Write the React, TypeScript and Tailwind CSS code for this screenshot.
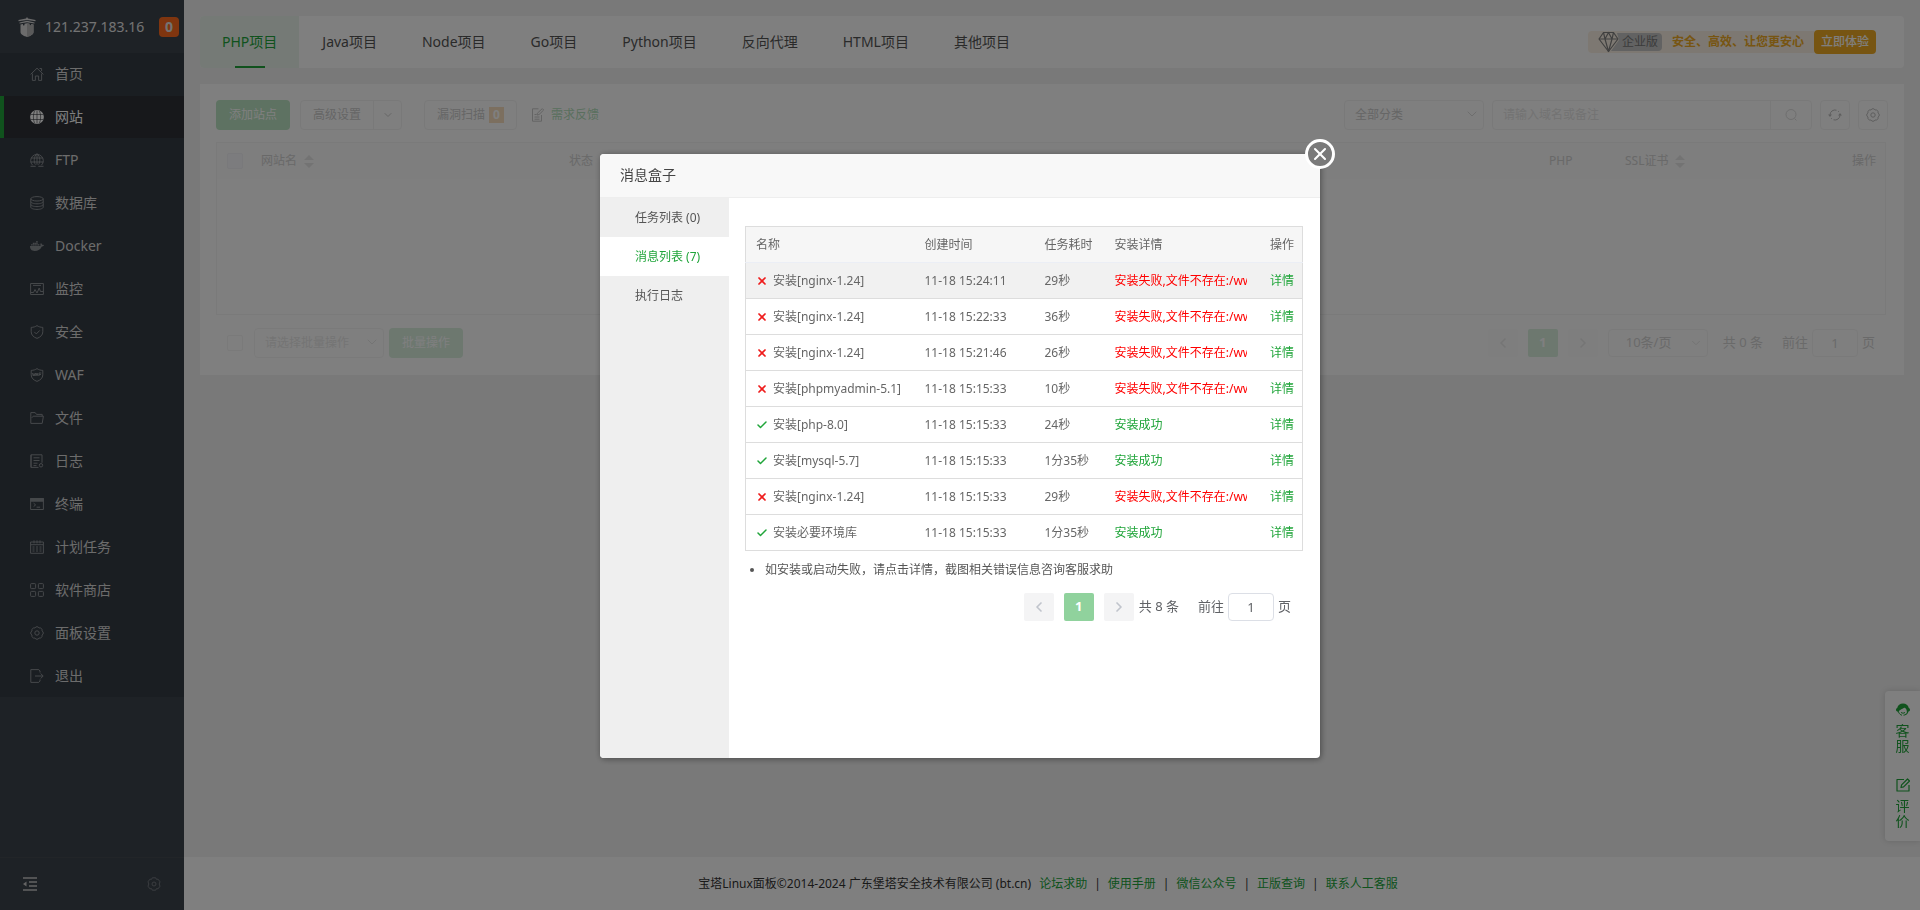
import type { ReactNode } from 'react'
import { Check, ChevronDown, ChevronLeft, ChevronRight, X } from 'lucide-react'
import { FaDocker } from 'react-icons/fa6'

function Icon({ children, size = 14, className = '' }: { children: ReactNode; size?: number; className?: string }) {
  return (
    <svg
      width={size}
      height={size}
      viewBox="0 0 14 14"
      fill="none"
      stroke="currentColor"
      strokeWidth="1"
      strokeLinejoin="round"
      className={`shrink-0 ${className}`}
      aria-hidden="true"
    >
      {children}
    </svg>
  )
}

function GearIcon() {
  return (
    <Icon>
      <path d="M11.990 9.070A2.300 2.300 0 0 1 9.070 11.990A2.300 2.300 0 0 1 4.930 11.990A2.300 2.300 0 0 1 2.010 9.070A2.300 2.300 0 0 1 2.010 4.930A2.300 2.300 0 0 1 4.930 2.010A2.300 2.300 0 0 1 9.070 2.010A2.300 2.300 0 0 1 11.990 4.930A2.300 2.300 0 0 1 11.990 9.070z" />
      <circle cx="7" cy="7" r="2.200" />
    </Icon>
  )
}

function HexGearIcon() {
  return (
    <Icon>
      <path d="M5.300.8h3.400l.7 1.500 1.700-.1 1.900 2.600L12.200 7l.8 2.200-1.900 2.600-1.700-.1-.7 1.500H5.300l-.7-1.500-1.700.1L1 9.200 1.800 7 1 4.800l1.900-2.600 1.700.1z" />
      <circle cx="7" cy="7" r="2" />
    </Icon>
  )
}

const menu: { label: string; icon: ReactNode; active?: boolean }[] = [
  {
    label: '首页',
    icon: (
      <Icon>
        <path d="M.6 7.400 7 1.200l6.400 6.200M2.400 6.600v6.800h3V9h3.200v4.400h3V6.600M9.600 1.500h2v2.600" />
      </Icon>
    ),
  },
  {
    label: '网站',
    active: true,
    icon: (
      <Icon>
        <circle cx="7" cy="7" r="6.900" fill="currentColor" stroke="none" />
        <path d="M.5 4.500h13M.5 9.500h13M7 .5v13M4.500 1C3 4.500 3 9.500 4.500 13M9.500 1C11 4.500 11 9.500 9.500 13" stroke="#2e3137" strokeWidth=".6" />
      </Icon>
    ),
  },
  {
    label: 'FTP',
    icon: (
      <Icon>
        <path d="M2.600 12.200a6.300 6.300 0 1 1 8.800 0M1 5h12M.7 9h12.600M7 .7v11M7 .7C3.600 3.400 3.600 9 5.400 11.600M7 .7C10.400 3.400 10.400 9 8.600 11.600M.5 13.300h5.200M8.300 13.300h5.200" />
      </Icon>
    ),
  },
  {
    label: '数据库',
    icon: (
      <Icon>
        <ellipse cx="7" cy="2.800" rx="6.200" ry="2.200" />
        <path d="M.8 2.800v8.400c0 1.200 2.800 2.200 6.200 2.200s6.200-1 6.200-2.200V2.800M.8 5.600c0 1.200 2.800 2.200 6.200 2.200s6.200-1 6.200-2.200M.8 8.400c0 1.200 2.800 2.200 6.200 2.200s6.200-1 6.200-2.200" />
      </Icon>
    ),
  },
  { label: 'Docker', icon: <FaDocker size={14} className="shrink-0" aria-hidden="true" /> },
  {
    label: '监控',
    icon: (
      <Icon>
        <path d="M.6 1.500h12.800v11H.6zM3 3.400h8M1 10.500h2.500l1.500-3 2 3.500 2.200-5 1.300 3.500H13" />
      </Icon>
    ),
  },
  {
    label: '安全',
    icon: (
      <Icon>
        <path d="M7 .6C5.400 1.800 3.400 2.300 1.200 2.400v4.400c0 3.200 2.300 5.300 5.800 6.600 3.500-1.300 5.800-3.400 5.800-6.600V2.400C10.600 2.300 8.600 1.800 7 .6zM4.300 6.900l2 2 3.500-3.500" />
      </Icon>
    ),
  },
  {
    label: 'WAF',
    icon: (
      <Icon>
        <path d="M7 .6C5.400 1.800 3.400 2.300 1.200 2.400v4.400c0 3.200 2.300 5.300 5.800 6.600 3.500-1.300 5.800-3.400 5.800-6.600V2.400C10.600 2.300 8.600 1.800 7 .6z" />
        <path d="M2.500 5l.8 3 .8-2.500.8 2.500.8-3M6 8l1-3 1 3M9 8V5h2.300M9 6.500h2" />
      </Icon>
    ),
  },
  {
    label: '文件',
    icon: (
      <Icon>
        <path d="M.8 12.400V1.600h4.400l1.300 1.800h5.700v1.800M.8 12.400h11.400l1.200-7.200H3.200l-1.400 1.600" />
      </Icon>
    ),
  },
  {
    label: '日志',
    icon: (
      <Icon>
        <path d="M8.500 13.400H1V.8h11v8M1 .8v12.600M3.500 3.800h6M3.500 6.500h6M3.500 9.200h4M3.500 11.600h3" />
        <circle cx="11" cy="11.300" r="1.700" />
      </Icon>
    ),
  },
  {
    label: '终端',
    icon: (
      <Icon>
        <path d="M.6 1.500h12.800v11H.6z" />
        <path d="M.6 1.500h12.800v2.700H.6z" fill="currentColor" />
        <path d="M3.600 6.200l2 1.700-2 1.700M6.600 10.200h3.500" />
      </Icon>
    ),
  },
  {
    label: '计划任务',
    icon: (
      <Icon>
        <path d="M.6 2h12.800v11.300H.6zM.6 4.700h12.800M4 .4v3M10 .4v3M7 .4v3M2.500 7h2M6 7h2M9.500 7h2M2.500 9h2M6 9h2M9.500 9h2M2.500 11h2M6 11h2M9.500 11h2" />
      </Icon>
    ),
  },
  {
    label: '软件商店',
    icon: (
      <Icon>
        <rect x=".6" y=".6" width="5" height="5" rx=".8" />
        <rect x="8.400" y=".6" width="5" height="5" rx=".8" />
        <rect x=".6" y="8.400" width="5" height="5" rx=".8" />
        <rect x="8.400" y="8.400" width="5" height="5" rx=".8" />
      </Icon>
    ),
  },
  { label: '面板设置', icon: <GearIcon /> },
  {
    label: '退出',
    icon: (
      <Icon>
        <path d="M10 3.500V2L8.800.6H.8v12.800h8L10 12v-1.500M5 7h8M10.600 4.500 13.200 7l-2.600 2.500" />
      </Icon>
    ),
  },
]

const tabs = ['PHP项目', 'Java项目', 'Node项目', 'Go项目', 'Python项目', '反向代理', 'HTML项目', '其他项目']

const messages = [
  { name: '安装[nginx-1.24]', time: '11-18 15:24:11', cost: '29秒', ok: false },
  { name: '安装[nginx-1.24]', time: '11-18 15:22:33', cost: '36秒', ok: false },
  { name: '安装[nginx-1.24]', time: '11-18 15:21:46', cost: '26秒', ok: false },
  { name: '安装[phpmyadmin-5.1]', time: '11-18 15:15:33', cost: '10秒', ok: false },
  { name: '安装[php-8.0]', time: '11-18 15:15:33', cost: '24秒', ok: true },
  { name: '安装[mysql-5.7]', time: '11-18 15:15:33', cost: '1分35秒', ok: true },
  { name: '安装[nginx-1.24]', time: '11-18 15:15:33', cost: '29秒', ok: false },
  { name: '安装必要环境库', time: '11-18 15:15:33', cost: '1分35秒', ok: true },
]

const footerLinks = ['论坛求助', '使用手册', '微信公众号', '正版查询', '联系人工客服']

function Sidebar() {
  return (
    <aside className="flex w-[184px] shrink-0 flex-col bg-[#3c444d] text-sm text-[#e6e6e6]">
      <div className="flex h-[53px] items-center pr-[5px] pl-[18px]">
        <svg width="18" height="20" viewBox="0 0 18 20" fill="#d8d8d8" className="shrink-0" aria-hidden="true">
          <path d="M9 0l1 1.600 7.500 1.500v1.200L9 3 .5 4.300V3.100L8 1.600zM9 3.800l7.500 1.700v1L9 5.200 1.500 6.500v-1zM2.500 7.500 5 7v1.500l1.500-.3V6.700L9 6.300l2.500.4v1.500l1.500.3V7l2.500.5V15c0 2.500-3.500 4-6.500 5-3-1-6.500-2.500-6.500-5z" />
          <path d="M9 6.300V20c3-1 6.500-2.500 6.500-5V7.500L13 7v1.500l-1.500-.3V6.700z" fill="#b4b4b4" />
        </svg>
        <span className="ml-[9px]">121.237.183.16</span>
        <span className="ml-auto flex size-5 items-center justify-center rounded bg-[#ff6b1f] font-bold">0</span>
      </div>
      <nav className="flex flex-col gap-px bg-[#353c44]">
        {menu.map((item) => (
          <a
            key={item.label}
            href="#"
            className={
              item.active
                ? 'flex h-[42px] items-center gap-[11px] border-l-4 border-[#20a53a] bg-[#2e3137] pl-[26px] text-white'
                : 'flex h-[42px] items-center gap-[11px] pl-[30px] text-[#d9d9d9]'
            }
          >
            <span className={item.active ? 'text-white' : 'text-[#8b9095]'}>{item.icon}</span>
            {item.label}
          </a>
        ))}
      </nav>
      <div className="mt-auto flex h-[53px] items-center justify-between border-t border-[#444a51] px-[23px]">
        <button type="button" title="收起菜单" className="text-[#c8c8c8]">
          <Icon>
            <path d="M0 1h14M6 5h8M6 9h8M0 13h14" strokeWidth="1.500" />
            <path d="M3.500 4.500v5L0 7z" fill="currentColor" stroke="none" />
          </Icon>
        </button>
        <button type="button" title="设置" className="text-[#757a80]">
          <HexGearIcon />
        </button>
      </div>
    </aside>
  )
}

function TopTabs() {
  return (
    <header className="flex h-[52px] items-center rounded bg-white text-sm text-[#555]">
      <nav className="flex h-full gap-px">
        {tabs.map((tab, i) => (
          <a
            key={tab}
            href="#"
            className={
              i === 0
                ? 'relative flex items-center rounded-l bg-[#ebf5ed] px-[22px] text-[#20a53a]'
                : 'flex items-center px-[22px]'
            }
          >
            {tab}
            {i === 0 && <span className="absolute bottom-0 left-1/2 h-0.5 w-[30px] -translate-x-1/2 bg-[#20a53a]" />}
          </a>
        ))}
      </nav>
      <div className="mr-7 ml-auto flex items-center text-xs">
        <div className="flex h-[22px] items-center rounded-l bg-[#fbf1e4] pl-2.5">
          <svg width="22" height="22" viewBox="0 0 22 22" fill="none" stroke="#808080" strokeWidth="1.200" strokeLinejoin="round" className="shrink-0" aria-hidden="true">
            <path d="M19 2h3v18h-9l8-11z" fill="#c4c4c4" stroke="none" />
            <path d="M5.500 1.500h10L20 8 10.500 20.500 1 8z" fill="#fbf1e4" />
            <path d="M1 8h19M5.500 1.500 7 8l3.500 12.500L14 8l1.500-6.500M7 8l3.500-6.500L14 8" />
          </svg>
          <span className="flex h-[18px] items-center rounded-r-sm bg-[#c4c4c4] pr-1 pl-0.5 text-[#777]">企业版</span>
          <span className="mr-2.5 ml-2.5 font-bold text-[#efab25]">安全、高效、让您更安心</span>
        </div>
        <button type="button" className="h-6 rounded-sm bg-[#efab25] px-[7px] font-medium text-white">立即体验</button>
      </div>
    </header>
  )
}

function SortIcon() {
  return (
    <svg width="10" height="13" viewBox="0 0 10 13" fill="#e6e6e6" aria-hidden="true">
      <path d="M5 0l5 5H0zM5 13l5-5H0z" />
    </svg>
  )
}

function Pager({ total, muted = false, children }: { total: number; muted?: boolean; children?: ReactNode }) {
  const input = muted
    ? 'mx-1 h-7 w-[46px] rounded border border-[#f5f5f5] bg-white text-center'
    : 'mx-1 h-7 w-[46px] rounded border border-[#dcdfe6] bg-white text-center'
  const arrow = muted
    ? 'flex h-7 w-[30px] items-center justify-center rounded-xs bg-[#fcfcfc] text-[#ebebeb]'
    : 'flex h-7 w-[30px] items-center justify-center rounded-xs bg-[#f4f4f5] text-[#c0c4cc]'
  return (
    <div className={muted ? 'flex items-center text-[13px] text-[#d4d4d4]' : 'flex items-center text-[13px] text-[#606266]'}>
      <div className="flex gap-2.5">
        <button type="button" title="上一页" className={arrow}>
          <ChevronLeft size={16} strokeWidth={2.500} />
        </button>
        <button
          type="button"
          className={
            muted
              ? 'h-7 w-[30px] rounded-xs bg-[#daf0df] font-bold text-white'
              : 'h-7 w-[30px] rounded-xs bg-[#90d29d] font-bold text-white'
          }
        >
          1
        </button>
        <button type="button" title="下一页" className={arrow}>
          <ChevronRight size={16} strokeWidth={2.500} />
        </button>
      </div>
      {children}
      <span className={muted ? 'ml-[15px]' : 'ml-[5px]'}>共 {total} 条</span>
      <label className="ml-[19px] flex items-center">
        前往
        <input type="text" defaultValue="1" className={input} />
        页
      </label>
    </div>
  )
}

function SitePanel() {
  return (
    <section className="mt-4 bg-white px-4 pt-4 pb-[17px] text-xs text-[#ccc]">
      <div className="flex h-[30px] items-center">
        <button type="button" className="h-full w-[74px] rounded bg-[#bce4c4] text-white">添加站点</button>
        <div className="ml-2.5 flex h-full rounded border border-[#f3f3f3]">
          <button type="button" className="px-3">高级设置</button>
          <button type="button" title="更多" className="flex w-7 items-center justify-center border-l border-[#f3f3f3]">
            <ChevronDown size={12} />
          </button>
        </div>
        <button type="button" className="ml-[22px] flex h-full items-center gap-1 rounded border border-[#f3f3f3] px-3">
          漏洞扫描
          <span className="flex h-4 w-[15px] items-center justify-center bg-[#f8dfbf] font-bold text-white">0</span>
        </button>
        <a href="#" className="ml-3.5 flex items-center gap-1.5 text-[#b4dfbd]">
          <Icon className="text-[#c8c8c8]">
            <path d="M7.500.8H1.500v12.400h9V7M3.500 9h5M3.500 11.200h5M3.500 6.500h2M6 7l.4-1.800L11.300.6l1.400 1.400L8 6.600z" />
          </Icon>
          需求反馈
        </a>
        <div className="ml-auto flex h-full items-center gap-2">
          <div className="relative h-full w-[140px]">
            <select aria-label="分类" className="h-full w-full appearance-none rounded border border-[#f3f3f3] bg-white pl-2.5">
              <option>全部分类</option>
            </select>
            <ChevronDown size={16} className="pointer-events-none absolute top-1.5 right-1 text-[#ddd]" strokeWidth={1.500} />
          </div>
          <div className="flex h-full w-[320px] rounded border border-[#f3f3f3]">
            <input type="text" aria-label="搜索" placeholder="请输入域名或备注" className="min-w-0 flex-1 px-2.5 placeholder:text-[#e6e6e6]" />
            <button type="button" title="搜索" className="flex w-[41px] items-center justify-center border-l border-[#f3f3f3] text-[#ddd]">
              <Icon>
                <circle cx="7" cy="6.500" r="5" />
                <path d="M10.500 10.500l2 2" />
              </Icon>
            </button>
          </div>
          <button type="button" title="刷新" className="flex size-[30px] items-center justify-center rounded border border-[#f3f3f3] text-[#bbb]">
            <Icon>
              <path d="M2 7A5 5 0 0 1 8.500 2.200M5.500 11.800A5 5 0 0 0 12 7M4 11a5 5 0 0 1-1-1M10 3a5 5 0 0 1 1 1" />
              <path d="M0 6.500h4L2 9zM10 7.500h4L12 5z" fill="currentColor" stroke="none" />
            </Icon>
          </button>
          <button type="button" title="设置" className="flex size-[30px] items-center justify-center rounded border border-[#f3f3f3] text-[#bbb]">
            <GearIcon />
          </button>
        </div>
      </div>

      <div className="mt-3 mr-0.5 h-[173px] border border-[#f4f4f4]">
        <table className="w-full table-fixed text-left text-[#d2d2d2]">
          <thead>
            <tr className="h-9 bg-[#fcfcfc]">
              <th className="w-[34px] pl-2.5">
                <input type="checkbox" aria-label="全选" className="block size-4 appearance-none rounded-xs border border-[#f2f2f6] bg-[#f9f9fc]" />
              </th>
              <th className="w-[308px] pl-2.5 font-normal">
                <span className="flex items-center gap-[7px]">网站名 <SortIcon /></span>
              </th>
              <th className="w-[980px] pl-2.5 font-normal">状态</th>
              <th className="w-[76px] pl-2.5 font-normal">PHP</th>
              <th className="pl-2.5 font-normal">
                <span className="flex items-center gap-[7px]">SSL证书 <SortIcon /></span>
              </th>
              <th className="w-16 pr-[9px] text-right font-normal">操作</th>
            </tr>
          </thead>
        </table>
      </div>

      <div className="mt-[13px] flex h-[30px] items-center">
        <input type="checkbox" aria-label="选择全部" className="ml-[11px] size-4 appearance-none rounded-xs border border-[#f5f5f5]" />
        <div className="relative ml-[11px] h-full w-[130px] text-[#e9e9e9]">
          <select aria-label="批量操作" className="h-full w-full appearance-none rounded border border-[#f5f5f5] bg-white pl-2.5">
            <option>请选择批量操作</option>
          </select>
          <ChevronDown size={16} className="pointer-events-none absolute top-1.5 right-1" strokeWidth={1.500} />
        </div>
        <button type="button" className="ml-[5px] h-full w-[74px] rounded bg-[#daf0df] text-white">批量操作</button>
        <div className="mr-[13px] ml-auto">
          <Pager total={0} muted>
            <div className="relative ml-2.5 h-7 w-[100px]">
              <select aria-label="每页条数" className="h-full w-full appearance-none rounded border border-[#f5f5f5] bg-white pl-[17px]">
                <option>10条/页</option>
              </select>
              <ChevronDown size={14} className="pointer-events-none absolute top-[7px] right-[5px] text-[#e4e4e4]" strokeWidth={1.500} />
            </div>
          </Pager>
        </div>
      </div>
    </section>
  )
}

function FloatingHelp() {
  return (
    <div className="fixed right-0 bottom-[69px] flex w-[35px] flex-col items-center gap-[25px] rounded-l bg-white pt-3 pb-[13px] text-sm leading-[15px] text-[#20a53a] shadow-[0_0_6px_rgba(0,0,0,0.15)]">
      <a href="#" className="flex w-3.5 flex-col items-center gap-1.5">
        <Icon>
          <path d="M7 .5a6 6 0 0 0-5.800 4.600C.4 5.300 0 6 0 6.800c0 1 .6 1.700 1.500 1.700.6 1 .8 1.300 1.500 2C2 7.500 4.500 6.800 6.500 5.800 8 5.200 8.500 4.500 9.200 5c1.500 1 1.800 3 1.600 5-.7.900-1.800 1.500-3.300 1.700v1c2.500-.2 4.300-1.700 5-4.200.9 0 1.500-.7 1.500-1.700 0-.8-.4-1.500-1.200-1.700A6 6 0 0 0 7 .5z" fill="currentColor" stroke="none" />
          <path d="M3 9.500c.5 1.500 1.500 2.500 3 2.700M5 9.500q2 1.500 4 0" />
        </Icon>
        <span>客服</span>
      </a>
      <a href="#" className="flex w-3.5 flex-col items-center gap-1.5">
        <Icon>
          <path d="M8 1.500H1v11.500h12V7M5 9.500l.6-2.600L11.500 1l2 2-5.900 5.900z" strokeWidth="1.200" />
        </Icon>
        <span>评价</span>
      </a>
    </div>
  )
}

function Footer() {
  return (
    <footer className="flex h-[53px] items-center justify-center bg-white pr-2 text-xs text-[#333]">
      <span className="mr-2">宝塔Linux面板©2014-2024 广东堡塔安全技术有限公司 (bt.cn)</span>
      {footerLinks.map((link, i) => (
        <span key={link}>
          {i > 0 && <span className="mx-[7px]">|</span>}
          <a href="#" className="text-[#20a53a]">{link}</a>
        </span>
      ))}
    </footer>
  )
}

function MessageTable() {
  return (
    <table className="w-full table-fixed border-collapse border border-[#ddd] text-left text-[#666]">
      <thead>
        <tr className="h-9 border-b border-[#ebeef5] bg-[#f6f6f6]">
          <th className="w-[169px] pl-2.5 font-normal">名称</th>
          <th className="w-[120px] pl-2.5 font-normal">创建时间</th>
          <th className="w-[70px] pl-2.5 font-normal">任务耗时</th>
          <th className="pl-2.5 font-normal">安装详情</th>
          <th className="w-[46px] pr-2 text-right font-normal">操作</th>
        </tr>
      </thead>
      <tbody>
        {messages.map((row, i) => (
          <tr key={i} className={i === 0 ? 'h-9 border-b border-[#ddd] bg-[#f1f1f1]' : 'h-9 border-b border-[#ddd]'}>
            <td className="pl-2.5">
              <span className="flex items-center gap-[5px]">
                {row.ok ? (
                  <Check size={12} strokeWidth={3} className="text-[#20a53a]" />
                ) : (
                  <X size={12} strokeWidth={3.500} className="text-[#ef1c1c]" />
                )}
                {row.name}
              </span>
            </td>
            <td className="pl-2.5">{row.time}</td>
            <td className="pl-2.5">{row.cost}</td>
            <td className="px-2.5">
              {row.ok ? (
                <span className="text-[#20a53a]">安装成功</span>
              ) : (
                <span className="block overflow-hidden whitespace-nowrap text-[#f00]">安装失败,文件不存在:/www</span>
              )}
            </td>
            <td className="pr-2 text-right">
              <a href="#" className="text-[#20a53a]">详情</a>
            </td>
          </tr>
        ))}
      </tbody>
    </table>
  )
}

function MessageBox() {
  return (
    <div className="fixed inset-0 z-20 flex items-center justify-center bg-black/50 pt-0.5">
      <div role="dialog" aria-label="消息盒子" className="relative flex h-[604px] w-[720px] flex-col rounded bg-white text-xs text-[#555] shadow-[1px_1px_6px_rgba(0,0,0,0.4)]">
        <h2 className="h-11 shrink-0 rounded-t border-b border-[#eee] bg-[#f8f8f8] pl-5 text-sm leading-[42px] text-[#444]">消息盒子</h2>
        <button
          type="button"
          title="关闭"
          className="absolute -top-[15px] -right-[15px] flex size-[30px] items-center justify-center rounded-full border-[3px] border-white bg-[#7a7a7a] text-white"
        >
          <X size={20} strokeWidth={2.500} className="shrink-0" />
        </button>
        <div className="flex flex-1">
          <nav className="flex w-[129px] shrink-0 flex-col rounded-bl bg-[#efefef] leading-[39px]">
            <a href="#" className="h-[39px] pl-[35px]">任务列表 (0)</a>
            <a href="#" className="h-[39px] bg-white pl-[35px] text-[#20a53a]">消息列表 (7)</a>
            <a href="#" className="h-[39px] pl-[35px]">执行日志</a>
          </nav>
          <div className="min-w-0 flex-1 pt-7 pr-[17px] pl-4">
            <MessageTable />
            <ul className="mt-[11px] list-disc pl-5">
              <li>如安装或启动失败，请点击详情，截图相关错误信息咨询客服求助</li>
            </ul>
            <div className="mt-[15px] mr-3 flex justify-end">
              <Pager total={8} />
            </div>
          </div>
        </div>
      </div>
    </div>
  )
}

export default function App() {
  return (
    <div className="flex min-h-screen bg-[#f2f2f2] font-['Noto_Sans','Noto_Sans_CJK_SC',sans-serif]">
      <Sidebar />
      <div className="flex min-w-0 flex-1 flex-col">
        <main className="flex-1 p-4">
          <TopTabs />
          <SitePanel />
        </main>
        <Footer />
      </div>
      <FloatingHelp />
      <MessageBox />
    </div>
  )
}
